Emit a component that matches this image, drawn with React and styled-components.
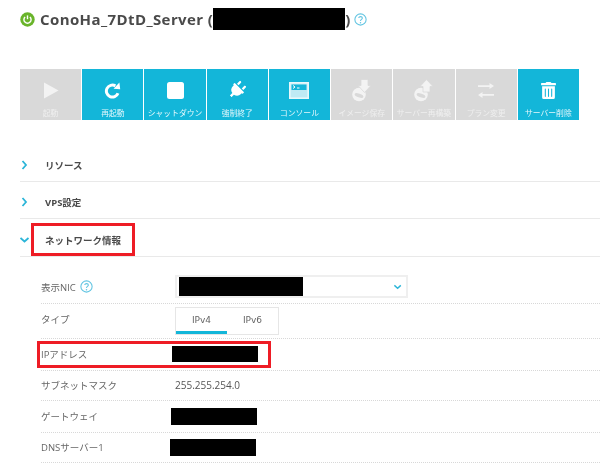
import React from 'react';
import styled, { createGlobalStyle } from 'styled-components';
import { FaPlug, FaTrashAlt } from 'react-icons/fa';

const GlobalStyle = createGlobalStyle`
  html, body {
    margin: 0;
    padding: 0;
    background: #fff;
    overflow: hidden;
  }
`;

const Page = styled.div`
  width: 600px;
  height: 463px;
  overflow: hidden;
  padding-left: 20px;
  box-sizing: border-box;
  font-family: "Open Sans", "Noto Sans CJK JP", sans-serif;
  color: #444;
  filter: blur(0.45px);
`;

const TitleRow = styled.div`
  display: flex;
  align-items: center;
  height: 22px;
  margin-top: 8px;
  font-size: 15px;
  font-weight: 700;
  color: #4a4a4a;
`;

const TitleText = styled.span`
  margin-left: ${p => p.$gap || 0}px;
  letter-spacing: 0.4px;
  white-space: pre;
`;

const HelpSlot = styled.span`
  display: flex;
  margin-left: 3px;
`;

const Redaction = styled.div`
  flex: none;
  width: ${p => p.$w}px;
  height: ${p => p.$h}px;
  margin-left: ${p => p.$shift || 0}px;
  background: #000;
`;

const Toolbar = styled.div`
  display: flex;
  gap: 1px;
  width: 559px;
  height: 51px;
  margin-top: 39px;
`;

const ToolButton = styled.div`
  flex: 1;
  display: flex;
  flex-direction: column;
  align-items: center;
  padding-top: 11px;
  box-sizing: border-box;
  background: ${p => (p.$on ? '#13b6d9' : '#d9d9d9')};
  color: ${p => (p.$on ? '#fff' : '#f3f3f3')};
`;

const ToolIcon = styled.div`
  height: 20px;
  display: flex;
  align-items: center;
  justify-content: center;
`;

const ToolLabel = styled.span`
  margin-top: 7px;
  font-size: 7.8px;
  line-height: 12px;
  white-space: nowrap;
  color: ${p => (p.$on ? '#e6f8fc' : '#efefef')};
`;

const Sections = styled.div`
  margin-top: 24px;
`;

const Section = styled.div`
  position: relative;
  display: flex;
  align-items: center;
  height: 37.5px;
  box-sizing: border-box;
  padding-top: 5px;
  border-bottom: 1px solid #e9e9e9;
  font-size: 9.5px;
  font-weight: 700;
  color: #4a4a4a;
`;

const ChevronBox = styled.span`
  width: 25px;
  display: flex;
  align-items: center;
`;

const Highlight = styled.div`
  position: absolute;
  left: ${p => p.$x}px;
  top: ${p => p.$y}px;
  width: ${p => p.$w}px;
  height: ${p => p.$h}px;
  box-sizing: border-box;
  border: 3px solid #ee1c25;
`;

const Detail = styled.div`
  margin-left: 21px;
`;

const Row = styled.div`
  position: relative;
  display: flex;
  align-items: center;
  height: ${p => p.$h}px;
  box-sizing: border-box;
  padding-top: ${p => p.$top || 0}px;
  border-bottom: 1px dotted #d8d8d8;
  font-size: 9.5px;
  color: #666;
`;

const Label = styled.div`
  width: 134px;
  flex: none;
  display: flex;
  align-items: center;
  gap: 4px;
  margin-bottom: ${p => p.$lift || 0}px;
`;

const Select = styled.div`
  width: 233px;
  height: 23px;
  box-sizing: border-box;
  border: 2px solid #efefef;
  display: flex;
  align-items: center;
  justify-content: space-between;
  padding: 0 4px 0 1px;
`;

const Tabs = styled.div`
  display: flex;
  width: 104px;
  height: 28px;
  box-sizing: border-box;
  border: 1px solid #e6e6e6;
  font-family: "DejaVu Sans", sans-serif;
  font-size: 9px;
  color: #666;
`;

const Tab = styled.div`
  width: 51px;
  display: flex;
  align-items: center;
  justify-content: center;
  box-sizing: border-box;
  padding-top: 1px;
  border-bottom: 3px solid ${p => (p.$active ? '#13b6d9' : 'transparent')};
`;

const Value = styled.span`
  font-size: 10px;
  color: #555;
`;

const Chevron = ({ open, size = 10 }) => (
  <svg width={size} height={size} viewBox="0 0 10 10" fill="none" stroke="#2bb5d8" strokeWidth="1.8">
    {open ? <path d="M0.5 3 L4.5 6.5 L8.5 3" /> : <path d="M2.5 1 L6 5 L2.5 9" />}
  </svg>
);

const Help = ({ size = 13 }) => (
  <svg width={size} height={size} viewBox="0 0 12 12" fill="none">
    <circle cx="6" cy="6" r="5.2" stroke="#63c5e2" strokeWidth="1" />
    <path d="M4.4 4.7 C4.4 2.8 7.7 2.9 7.7 4.7 C7.7 5.9 6 5.9 6 7.3" stroke="#63c5e2" strokeWidth="1" />
    <circle cx="6" cy="8.9" r="0.7" fill="#63c5e2" />
  </svg>
);

const PowerBadge = () => (
  <svg width="15" height="15" viewBox="0 0 15 15" fill="none">
    <circle cx="7.5" cy="7.5" r="7.2" fill="#69b42a" />
    <path d="M5.1 4.9 A3.6 3.6 0 1 0 9.9 4.9" stroke="#fff" strokeWidth="1.4" />
    <path d="M7.5 3.4 V7.2" stroke="#fff" strokeWidth="1.4" />
  </svg>
);

const PlayIcon = () => (
  <svg width="16" height="17" viewBox="0 0 16 17"><path d="M1 0.5 L15.5 8.5 L1 16.5 Z" fill="currentColor" /></svg>
);

const RestartIcon = () => (
  <svg width="17" height="17" viewBox="0 0 17 17" fill="none">
    <path d="M14 11.2 A6 6 0 1 1 11.4 3.9" stroke="currentColor" strokeWidth="3" />
    <path d="M9.6 6.8 L16.2 7.2 L15.4 0.4 Z" fill="currentColor" />
  </svg>
);

const StopIcon = () => (
  <svg width="17" height="17" viewBox="0 0 17 17"><rect width="17" height="17" rx="2.5" fill="currentColor" /></svg>
);

const ConsoleIcon = () => (
  <svg width="20" height="17" viewBox="0 0 20 17" fill="none">
    <rect x="0.8" y="0.8" width="18.4" height="15.4" fill="#bfeaf4" stroke="#e8f8fb" strokeWidth="1.6" />
    <rect x="2.5" y="2.5" width="15" height="5.5" fill="#13b6d9" />
    <path d="M4 3.5 L6 5 L4 6.5 M8 6 H10.5" stroke="#fff" strokeWidth="1" />
  </svg>
);

const DiskIcon = ({ up }) => (
  <svg width="20" height="23" viewBox="0 0 20 23" fill="none">
    <circle cx="7" cy="15.5" r="6.8" fill="currentColor" />
    <ellipse cx="7" cy="16.5" rx="4.6" ry="1.8" fill="#d9d9d9" transform="rotate(20 7 16.5)" />
    <path
      d={up ? 'M12.5 0.5 L19 7.5 H16 V13 H9 V7.5 H6 Z' : 'M9 0.5 H16 V6.5 H19 L12.5 13.5 L6 6.5 H9 Z'}
      fill="currentColor"
      stroke="#d9d9d9"
      strokeWidth="0.8"
    />
  </svg>
);

const SwapIcon = () => (
  <svg width="16" height="15" viewBox="0 0 16 15" fill="currentColor">
    <path d="M0 2.2 H11.5 V0 L16 3 L11.5 6 V3.9 H0 Z" />
    <path d="M16 11 H4.5 V9 L0 12 L4.5 15 V12.7 H16 Z" />
  </svg>
);

const tools = [
  { label: '起動', icon: <PlayIcon /> },
  { label: '再起動', on: true, icon: <RestartIcon /> },
  { label: 'シャットダウン', on: true, icon: <StopIcon /> },
  { label: '強制終了', on: true, icon: <FaPlug size={18} style={{ transform: 'rotate(45deg)' }} /> },
  { label: 'コンソール', on: true, icon: <ConsoleIcon /> },
  { label: 'イメージ保存', icon: <DiskIcon /> },
  { label: 'サーバー再構築', icon: <DiskIcon up /> },
  { label: 'プラン変更', icon: <SwapIcon /> },
  { label: 'サーバー削除', on: true, icon: <FaTrashAlt size={17} /> },
];

export default function App() {
  return (
    <Page>
      <GlobalStyle />
      <TitleRow>
        <PowerBadge />
        <TitleText $gap={5}>ConoHa_7DtD_Server (</TitleText>
        <Redaction $w={132} $h={22} />
        <TitleText>)</TitleText>
        <HelpSlot><Help /></HelpSlot>
      </TitleRow>

      <Toolbar>
        {tools.map(t => (
          <ToolButton key={t.label} $on={t.on}>
            <ToolIcon>{t.icon}</ToolIcon>
            <ToolLabel $on={t.on}>{t.label}</ToolLabel>
          </ToolButton>
        ))}
      </Toolbar>

      <Sections>
        <Section><ChevronBox><Chevron /></ChevronBox>リソース</Section>
        <Section><ChevronBox><Chevron /></ChevronBox>VPS設定</Section>
        <Section>
          <ChevronBox><Chevron open /></ChevronBox>ネットワーク情報
          <Highlight $x={11} $y={4} $w={104} $h={33} />
        </Section>
      </Sections>

      <Detail>
        <Row $h={47} $top={14}>
          <Label>表示NIC <Help /></Label>
          <Select>
            <Redaction $w={124} $h={19} $shift={1} />
            <Chevron open size={8} />
          </Select>
        </Row>
        <Row $h={35}>
          <Label $lift={4}>タイプ</Label>
          <Tabs>
            <Tab $active>IPv4</Tab>
            <Tab>IPv6</Tab>
          </Tabs>
        </Row>
        <Row $h={32}>
          <Label>IPアドレス</Label>
          <Redaction $w={86} $h={16} $shift={-3} />
          <Highlight $x={-4} $y={2} $w={234} $h={27} />
        </Row>
        <Row $h={30}>
          <Label>サブネットマスク</Label>
          <Value>255.255.254.0</Value>
        </Row>
        <Row $h={32}>
          <Label>ゲートウェイ</Label>
          <Redaction $w={86} $h={17} $shift={-4} />
        </Row>
        <Row $h={30}>
          <Label>DNSサーバー1</Label>
          <Redaction $w={86} $h={17} $shift={-5} />
        </Row>
      </Detail>
    </Page>
  );
}
